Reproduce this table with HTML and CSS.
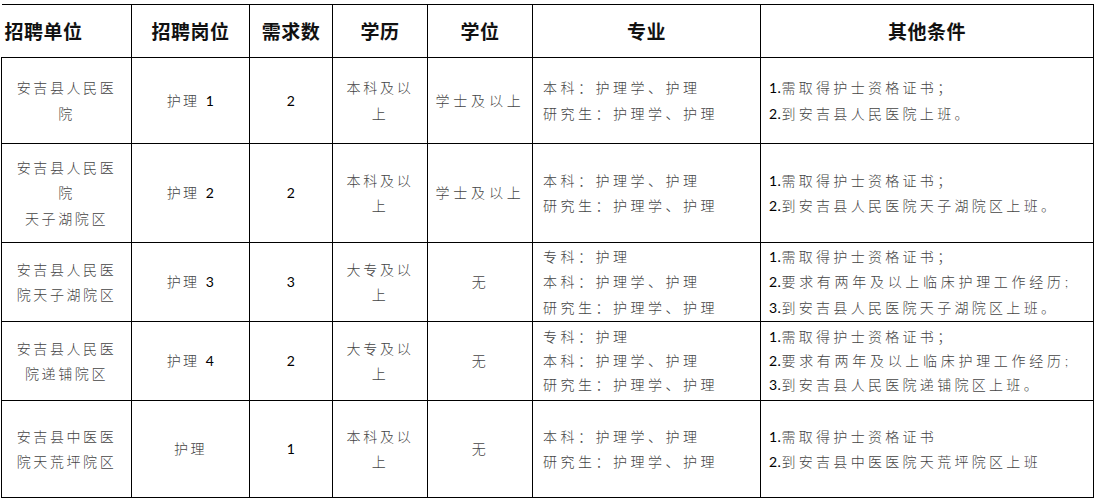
FILE: index.html
```html
<!DOCTYPE html>
<html lang="zh-CN">
<head>
<meta charset="utf-8">
<title>招聘岗位</title>
<link rel="stylesheet" href="styles.css">
</head>
<body>
<table class="jobs">
  <colgroup>
    <col class="c-unit"><col class="c-post"><col class="c-num"><col class="c-edu"><col class="c-deg"><col class="c-major"><col class="c-other">
  </colgroup>
  <thead>
    <tr class="r-head">
      <th class="first">招聘单位</th>
      <th>招聘岗位</th>
      <th>需求数</th>
      <th>学历</th>
      <th>学位</th>
      <th>专业</th>
      <th>其他条件</th>
    </tr>
  </thead>
  <tbody>
    <tr class="r1">
      <td class="ctr unit">安吉县人民医<br>院</td>
      <td class="ctr">护理 <span class="num">1</span></td>
      <td class="ctr"><span class="num">2</span></td>
      <td class="ctr edu">本科及以<br>上</td>
      <td class="ctr deg">学士及以上</td>
      <td class="lft">本科：护理学、护理<br>研究生：护理学、护理</td>
      <td class="lft other"><span class="num">1.</span>需取得护士资格证书；<br><span class="num">2.</span>到安吉县人民医院上班。</td>
    </tr>
    <tr class="r2">
      <td class="ctr unit">安吉县人民医<br>院<br>天子湖院区</td>
      <td class="ctr">护理 <span class="num">2</span></td>
      <td class="ctr"><span class="num">2</span></td>
      <td class="ctr edu">本科及以<br>上</td>
      <td class="ctr deg">学士及以上</td>
      <td class="lft">本科：护理学、护理<br>研究生：护理学、护理</td>
      <td class="lft other"><span class="num">1.</span>需取得护士资格证书；<br><span class="num">2.</span>到安吉县人民医院天子湖院区上班。</td>
    </tr>
    <tr class="r3">
      <td class="ctr unit">安吉县人民医<br>院天子湖院区</td>
      <td class="ctr">护理 <span class="num">3</span></td>
      <td class="ctr"><span class="num">3</span></td>
      <td class="ctr edu">大专及以<br>上</td>
      <td class="ctr">无</td>
      <td class="lft">专科：护理<br>本科：护理学、护理<br>研究生：护理学、护理</td>
      <td class="lft other"><span class="num">1.</span>需取得护士资格证书；<br><span class="num">2.</span><span class="spread">要求有两年及以上临床护理工作经历</span>;<br><span class="num">3.</span>到安吉县人民医院天子湖院区上班。</td>
    </tr>
    <tr class="r4">
      <td class="ctr unit">安吉县人民医<br>院递铺院区</td>
      <td class="ctr">护理 <span class="num">4</span></td>
      <td class="ctr"><span class="num">2</span></td>
      <td class="ctr edu">大专及以<br>上</td>
      <td class="ctr">无</td>
      <td class="lft tight">专科：护理<br>本科：护理学、护理<br>研究生：护理学、护理</td>
      <td class="lft other tight"><span class="num">1.</span>需取得护士资格证书；<br><span class="num">2.</span><span class="spread">要求有两年及以上临床护理工作经历</span>;<br><span class="num">3.</span>到安吉县人民医院递铺院区上班。</td>
    </tr>
    <tr class="r5">
      <td class="ctr unit">安吉县中医医<br>院天荒坪院区</td>
      <td class="ctr">护理</td>
      <td class="ctr"><span class="num">1</span></td>
      <td class="ctr edu">本科及以<br>上</td>
      <td class="ctr">无</td>
      <td class="lft">本科：护理学、护理<br>研究生：护理学、护理</td>
      <td class="lft other"><span class="num">1.</span>需取得护士资格证书<br><span class="num">2.</span>到安吉县中医医院天荒坪院区上班</td>
    </tr>
  </tbody>
</table>
</body>
</html>
```

FILE: styles.css
```css
html, body {
  margin: 0;
  padding: 0;
  background: #ffffff;
}

body {
  padding: 4px 0 0 1px;
}

.jobs {
  border-collapse: collapse;
  table-layout: fixed;
  width: 1093px;
  font-family: "Lato", "Noto Sans CJK SC", sans-serif;
  font-size: 14px;
  color: #444444;
}

.c-unit { width: 130px; }
.c-post { width: 118px; }
.c-num { width: 83px; }
.c-edu { width: 95px; }
.c-deg { width: 105px; }
.c-major { width: 228px; }
.c-other { width: 333px; }

.jobs th,
.jobs td {
  border: 1px solid #000000;
  padding: 0;
  vertical-align: middle;
}

.jobs th {
  font-family: "Noto Sans CJK SC", sans-serif;
  font-weight: 700;
  font-size: 19px;
  color: #111111;
  text-align: center;
  letter-spacing: 0.5px;
  line-height: 26px;
}

.jobs th.first {
  border-left: none;
  text-align: left;
  padding-left: 3px;
}

.jobs td {
  line-height: 25.5px;
  letter-spacing: 2.4px;
  font-weight: 300;
}

.jobs td.ctr {
  text-align: center;
}

.jobs td.unit {
  letter-spacing: 2.6px;
}

.jobs td.edu {
  letter-spacing: 2.7px;
}

.jobs td.deg {
  letter-spacing: 3.8px;
}

.jobs td.lft {
  text-align: left;
  padding-left: 10px;
  letter-spacing: 3.5px;
}

.jobs td.other {
  padding-left: 8px;
  letter-spacing: 3.3px;
}

.jobs td.tight {
  line-height: 24px;
}

.spread {
  letter-spacing: 3.7px;
}

.num {
  color: #000000;
  font-weight: 400;
  letter-spacing: 0.5px;
}

.r-head { height: 53px; }
.r1 { height: 86px; }
.r2 { height: 99px; }
.r3 { height: 79px; }
.r4 { height: 79px; }
.r5 { height: 97px; }
```
